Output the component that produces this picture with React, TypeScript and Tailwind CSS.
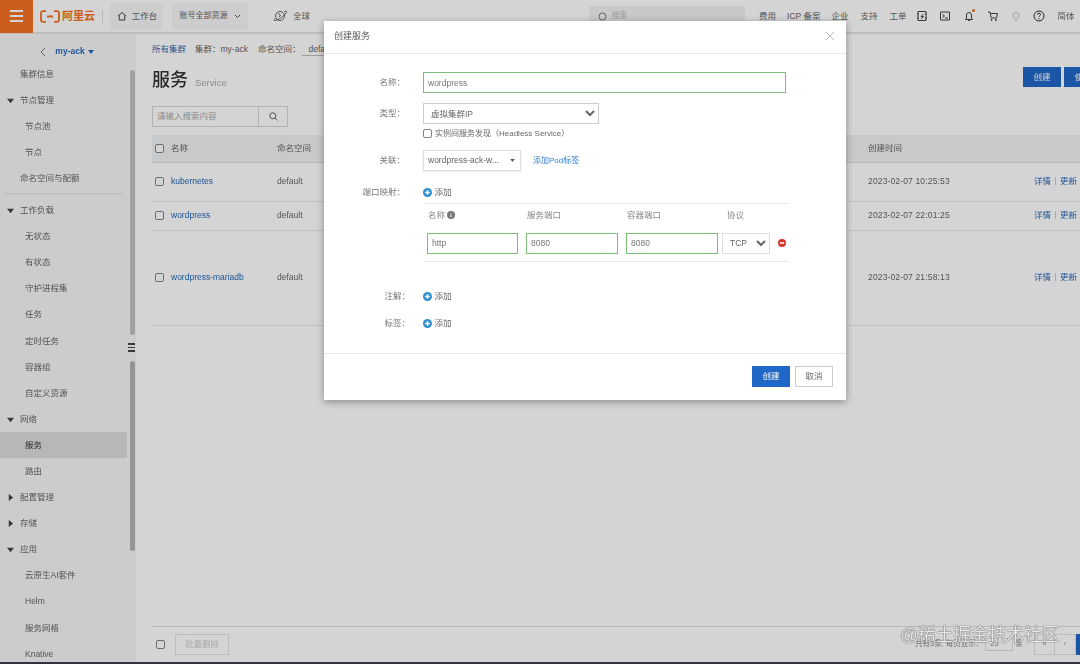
import { FC, ReactNode } from "react";

const FONT = "font-['Liberation_Sans','Noto_Sans_CJK_SC',sans-serif]";

type NavItem = { label: string; level: 0 | 1 | 2; arrow?: "down" | "right"; active?: boolean };

const navItems: NavItem[] = [
  { label: "节点管理", level: 0, arrow: "down" },
  { label: "节点池", level: 2 },
  { label: "节点", level: 2 },
  { label: "命名空间与配额", level: 1 },
  { label: "工作负载", level: 0, arrow: "down" },
  { label: "无状态", level: 2 },
  { label: "有状态", level: 2 },
  { label: "守护进程集", level: 2 },
  { label: "任务", level: 2 },
  { label: "定时任务", level: 2 },
  { label: "容器组", level: 2 },
  { label: "自定义资源", level: 2 },
  { label: "网络", level: 0, arrow: "down" },
  { label: "服务", level: 2, active: true },
  { label: "路由", level: 2 },
  { label: "配置管理", level: 0, arrow: "right" },
  { label: "存储", level: 0, arrow: "right" },
  { label: "应用", level: 0, arrow: "down" },
  { label: "云原生AI套件", level: 2 },
  { label: "Helm", level: 2 },
  { label: "服务网格", level: 2 },
  { label: "Knative", level: 2 },
];

const rows = [
  { name: "kubernetes", h: "h-[39px]", time: "2023-02-07 10:25:53" },
  { name: "wordpress", h: "h-[29px]", time: "2023-02-07 22:01:25" },
  { name: "wordpress-mariadb", h: "h-[95px]", time: "2023-02-07 21:58:13" },
];

const Check: FC = () => (
  <span className="w-[9px] h-[9px] block shrink-0 border border-[#80858a] rounded-[2px] bg-white" />
);

const Caret: FC<{ dir: "down" | "right" }> = ({ dir }) => (
  <svg width="7" height="7" viewBox="0 0 8 8" className="shrink-0">
    {dir === "down" ? <path d="M0 2h8L4 7z" fill="#444" /> : <path d="M2 0v8l5-4z" fill="#444" />}
  </svg>
);

const PlusIcon: FC = () => (
  <svg width="9" height="9" viewBox="0 0 10 10" className="shrink-0">
    <circle cx="5" cy="5" r="5" fill="#2f8fd0" />
    <path d="M5 2.400v5.200M2.400 5h5.200" stroke="#fff" strokeWidth="1.700" />
  </svg>
);

const AddRow: FC<{ label: string; className: string; labelPad?: string }> = ({ label, className, labelPad = "pr-[18px]" }) => (
  <div className={`flex items-center ${className}`}>
    <span className={`w-[99px] ${labelPad} text-right text-[8.500px] text-[#777] whitespace-nowrap`}>{label}</span>
    <PlusIcon />
    <span className="ml-[2.500px] text-[8.500px] text-[#666]">添加</span>
  </div>
);

const Field: FC<{ label: string; children: ReactNode; className?: string }> = ({ label, children, className = "" }) => (
  <div className={`flex items-center ${className}`}>
    <span className="w-[99px] pr-[18px] text-right text-[8.500px] text-[#777]">{label}</span>
    {children}
  </div>
);

const TopIcon: FC<{ children: ReactNode; className?: string }> = ({ children, className = "" }) => (
  <svg width="12" height="12" viewBox="0 0 12 12" fill="none" stroke="#444" strokeWidth="1" className={className}>
    {children}
  </svg>
);

const TopBar: FC = () => (
  <header className="h-[34px] shrink-0 flex items-center bg-white border-b-[2px] border-[#e4e4e4] text-[8.500px] text-[#666] whitespace-nowrap">
    <div className="w-[33px] h-[33px] shrink-0 bg-[#f57124] flex flex-col justify-center items-center gap-[3.500px]">
      <span className="w-[13px] h-[1.500px] bg-white" />
      <span className="w-[13px] h-[1.500px] bg-white" />
      <span className="w-[13px] h-[1.500px] bg-white" />
    </div>
    <svg width="20" height="13" viewBox="0 0 20 13" className="ml-[7px] shrink-0" fill="none" stroke="#f57124" strokeWidth="1.800">
      <path d="M6 1.200H3.200Q1 1.200 1 3.200v6.600q0 2 2.200 2H6M14 1.200h2.800q2.200 0 2.200 2v6.600q0 2-2.200 2H14M7 6.500h6" />
    </svg>
    <span className="ml-[2px] w-[33px] shrink-0 text-[11px] font-bold text-[#f57124] leading-none">阿里云</span>
    <span className="ml-[7px] w-px h-[13px] shrink-0 bg-[#ddd]" />
    <div className="ml-[7px] w-[53px] h-[27px] shrink-0 flex items-center justify-center gap-[4px] bg-[#f7f7f7]">
      <TopIcon>
        <path d="M2 6l4-3.500L10 6M3.200 5.500V10h5.600V5.500" />
      </TopIcon>
      <span>工作台</span>
    </div>
    <div className="ml-[9px] w-[76px] h-[27px] shrink-0 flex items-center justify-center gap-[6px] bg-[#f7f7f7]">
      <span className="text-[8px]">账号全部资源</span>
      <svg width="7" height="5" viewBox="0 0 7 5" fill="none" stroke="#555">
        <path d="M1 1l2.500 2.500L6 1" />
      </svg>
    </div>
    <svg width="16" height="14" viewBox="0 0 16 14" fill="none" stroke="#555" strokeWidth="0.900" className="ml-[24px] shrink-0">
      <circle cx="8" cy="7" r="4.500" />
      <path d="M3 9.500C1 11.500 2 12 5 11c3-1 8-5 9.500-7.500.7-1.500-.5-1.500-2.500-.8M6 4.500l2.500 1.500L7 8" />
    </svg>
    <span className="ml-[5px] w-[17px] shrink-0">全球</span>
    <div className="ml-[279px] w-[156px] h-[20px] shrink-0 flex items-center pl-[9px] gap-[5px] bg-[#f2f2f2] text-[#bbb]">
      <svg width="9" height="9" viewBox="0 0 9 9" fill="none" stroke="#777">
        <circle cx="4.500" cy="4.500" r="3.500" />
      </svg>
      <span className="text-[7.500px]">搜索</span>
    </div>
    <nav className="ml-[14px] flex items-center">
      <span>费用</span>
      <span className="ml-[11px]">ICP 备案</span>
      <span className="ml-[11px]">企业</span>
      <span className="ml-[12px]">支持</span>
      <span className="ml-[12px]">工单</span>
      <TopIcon className="ml-[10px]">
        <path d="M2 1.500h8v9H2zM1 4h2M9 4h2M1 8h2M9 8h2M7.500 4L5 6.500h2.500L5 9" />
      </TopIcon>
      <TopIcon className="ml-[11px]">
        <path d="M1.500 2h9v8h-9zM3.500 4.500L5.500 6 3.500 7.500M6 8h3" />
      </TopIcon>
      <div className="relative ml-[12px]">
        <TopIcon className="block">
          <path d="M2.500 9.500h7L8.500 8V5a2.500 2.500 0 00-5 0v3zM5 10.500h2" />
        </TopIcon>
        <span className="absolute -top-[1px] right-[0px] w-[3px] h-[3px] rounded-full bg-[#ee6a1f]" />
      </div>
      <TopIcon className="ml-[12px]">
        <path d="M1 2h2l1.200 6h5.300L10.500 3.500H3.500" />
        <circle cx="4.500" cy="10" r=".6" />
        <circle cx="9" cy="10" r=".6" />
      </TopIcon>
      <svg width="12" height="12" viewBox="0 0 12 12" fill="none" stroke="#c4c4c4" className="ml-[11px]">
        <path d="M4.500 8.500C3.500 7.500 3 6.700 3 5.500a3 3 0 016 0c0 1.200-.5 2-1.500 3zM5 10.500h2" />
      </svg>
      <svg width="12" height="12" viewBox="0 0 12 12" fill="none" stroke="#333" className="ml-[11px]">
        <circle cx="6" cy="6" r="5" />
        <path d="M4.500 4.700a1.500 1.500 0 113 0c0 1-1.500 1.200-1.500 2.300M6 8.200v1" />
      </svg>
      <span className="ml-[12px]">简体</span>
    </nav>
  </header>
);

const Sidebar: FC = () => (
  <aside className="w-[136px] shrink-0 flex flex-col overflow-hidden bg-[#f6f6f6] text-[8.500px] text-[#666]">
    <div className="h-[26px] shrink-0 flex items-center justify-center gap-[9px] pr-[2px] pt-[9px]">
      <svg width="6" height="10" viewBox="0 0 6 10" fill="none" stroke="#777">
        <path d="M5 1L1 5l4 4" />
      </svg>
      <span className="font-bold text-[#2767b5]">my-ack</span>
      <span className="-ml-[6px]">
        <svg width="6" height="4" viewBox="0 0 6 4">
          <path d="M0 0h6L3 4z" fill="#2767b5" />
        </svg>
      </span>
    </div>
    <div className="flex flex-1 min-h-0">
      <div className="w-[127px] shrink-0 flex flex-col">
        <div className="h-[27px] shrink-0 flex items-center pl-[20px] pt-[1px]">集群信息</div>
        {navItems.map((item) => (
          <div key={item.label}>
            {item.label === "工作负载" && <div className="mx-[4px] mt-[2px] mb-[3px] h-px bg-[#e2e2e2]" />}
            <div
              className={`h-[26.100px] flex items-center ${item.active ? "bg-[#dcdcdc] text-[#333]" : ""} ${
                item.level === 2 ? "pl-[25px]" : item.level === 1 ? "pl-[20px]" : "pl-[7px]"
              }`}
            >
              {item.arrow && <Caret dir={item.arrow} />}
              <span className={item.arrow ? "ml-[6px]" : ""}>{item.label}</span>
            </div>
          </div>
        ))}
      </div>
      <div className="relative w-[9px] flex flex-col items-center pt-[10px]">
        <span className="w-[5px] h-[265px] ml-[1px] rounded-full bg-[#c2c2c2]" />
        <span className="absolute left-[1px] top-[282px] flex flex-col gap-[2px] py-[1px]">
          <span className="w-[7px] h-[1.500px] bg-[#444]" />
          <span className="w-[7px] h-[1.500px] bg-[#444]" />
          <span className="w-[7px] h-[1.500px] bg-[#444]" />
        </span>
        <span className="w-[5px] h-[190px] mt-[26px] ml-[1px] rounded-full bg-[#b4b4b4]" />
      </div>
    </div>
  </aside>
);

const Content: FC = () => (
  <main className="flex-1 min-w-0 flex flex-col pl-[16px] bg-white text-[8.500px] text-[#666] whitespace-nowrap">
    <div className="h-[30px] shrink-0 flex items-center pt-[1px]">
      <span className="text-[#2767b5]">所有集群</span>
      <span className="ml-[9px]">集群：my-ack</span>
      <span className="ml-[10px]">命名空间：</span>
      <span className="ml-[2px] pl-[6px] w-[50px] border-b border-[#bbb]">default</span>
    </div>
    <div className="h-[29px] shrink-0 flex items-end relative">
      <div className="flex items-center w-full">
        <h1 className="text-[18px] leading-[26px] font-medium text-[#333]">服务</h1>
        <span className="ml-[7px] mt-[6px] text-[9.500px] text-[#aaa]">Service</span>
        <div className="ml-auto flex gap-[3px] -mt-[6px]">
          <button className="w-[38px] h-[20px] bg-[#2068c7] text-white text-[8.500px]">创建</button>
          <button className="w-[38px] h-[20px] bg-[#2068c7] text-white text-[8.500px] -mr-[22px]">使用</button>
        </div>
      </div>
    </div>
    <div className="mt-[13px] h-[21px] shrink-0 flex">
      <div className="w-[107px] border border-[#d8d8d8] flex items-center pl-[4px] text-[#aaa] bg-white">请输入搜索内容</div>
      <div className="w-[30px] -ml-px border border-[#d8d8d8] flex items-center justify-center">
        <svg width="9" height="9" viewBox="0 0 9 9" fill="none" stroke="#666">
          <circle cx="3.800" cy="3.800" r="3" />
          <path d="M6 6l2.500 2.500" />
        </svg>
      </div>
    </div>
    <div className="mt-[8px] w-[1000px] flex flex-col flex-1 min-h-0">
      <div className="h-[28px] shrink-0 flex items-center bg-[#f0f2f4] border-b border-[#dbdee0] pl-[3px]">
        <Check />
        <span className="ml-[7px] w-[106px]">名称</span>
        <span className="w-[591px]">命名空间</span>
        <span>创建时间</span>
      </div>
      {rows.map((r) => (
        <div key={r.name} className={`${r.h} shrink-0 flex items-center border-b border-[#e6e8ea] pl-[3px] pb-[2px]`}>
          <Check />
          <span className="ml-[7px] w-[106px] text-[#2767b5]">{r.name}</span>
          <span className="w-[591px]">default</span>
          <span className="w-[166px] tracking-[0.150px]">{r.time}</span>
          <span className="text-[#2767b5]">详情</span>
          <span className="mx-[4px] w-px h-[8px] bg-[#ccc]" />
          <span className="text-[#2767b5]">更新</span>
        </div>
      ))}
      <div className="flex-1" />
    </div>
    <div className="h-[35px] shrink-0 border-t border-[#e0e0e0] w-[1000px] flex items-center pl-[4px] mb-[3px]">
      <Check />
      <span className="ml-[10px] w-[54px] h-[21px] border border-[#e4e4e4] flex items-center justify-center text-[#ccc]">批量删除</span>
      <span className="ml-[686px] text-[7.500px] text-[#888]">共有3条, 每页显示：</span>
      <span className="ml-[2px] w-[28px] h-[13px] border border-[#ddd] flex items-center pl-[4px] text-[7.500px] text-[#888]">25</span>
      <span className="ml-[2px] text-[7.500px] text-[#888]">条</span>
      <span className="ml-[11px] w-[21px] h-[21px] border border-[#e4e4e4] flex items-center justify-center text-[7px] text-[#888]">«</span>
      <span className="w-[21px] h-[21px] border-y border-r border-[#e4e4e4] flex items-center justify-center text-[7px] text-[#888]">‹</span>
      <span className="w-[21px] h-[21px] bg-[#2068c7]" />
    </div>
  </main>
);

const portInput = "h-[21px] border border-[#7dbb78] pl-[4px] text-[8.500px] text-[#777] outline-none";

const CreateModal: FC = () => (
  <section className="absolute left-[324px] top-[21px] w-[522px] h-[379px] flex flex-col bg-white shadow-[0_2px_8px_rgba(0,0,0,0.35)] text-[8.500px] text-[#666]">
    <header className="h-[33px] shrink-0 flex items-center justify-between pl-[10px] pr-[11px] border-b border-[#e8e8e8]">
      <span className="text-[9px] text-[#555]">创建服务</span>
      <svg width="10" height="10" viewBox="0 0 10 10" stroke="#bdbdbd" className="-mt-[3px]">
        <path d="M1 1l8 8M9 1l-8 8" />
      </svg>
    </header>
    <div className="flex-1 min-h-0 flex flex-col pt-[18px]">
      <Field label="名称：" className="h-[21px]">
        <input readOnly defaultValue="wordpress" className={`w-[363px] ${portInput}`} />
      </Field>
      <Field label="类型：" className="h-[21px] mt-[10px]">
        <select defaultValue="ip" className="w-[176px] h-[21px] border border-[#ccc] pl-[3px] text-[8.500px] text-[#666] bg-white">
          <option value="ip">虚拟集群IP</option>
        </select>
      </Field>
      <div className="flex items-center h-[10px] mt-[4px] pl-[99px]">
        <Check />
        <span className="ml-[3px] mt-[2px] text-[8px] whitespace-nowrap">实例间服务发现（Headless Service）</span>
      </div>
      <Field label="关联：" className="h-[21px] mt-[12px]">
        <div className="w-[98px] h-[21px] border border-[#ddd] flex items-center justify-between pl-[4px] pr-[5px] text-[8.500px] shadow-[0_1px_2px_rgba(0,0,0,0.08)]">
          <span>wordpress-ack-w...</span>
          <svg width="5" height="3" viewBox="0 0 6 4">
            <path d="M0 0h6L3 4z" fill="#555" />
          </svg>
        </div>
        <span className="ml-[12px] text-[8px] text-[#2d7fd3]">添加Pod标签</span>
      </Field>
      <AddRow label="端口映射：" className="h-[10px] mt-[16px]" />
      <div className="ml-[100px] mt-[6px] w-[364px] border-t border-[#e8e8e8]">
        <div className="h-[22px] flex items-center pl-[4px] text-[#888]">
          <span className="w-[99px] flex items-center gap-[2px]">
            名称
            <svg width="8" height="8" viewBox="0 0 8 8">
              <circle cx="4" cy="4" r="4" fill="#777" />
              <path d="M4 1.800v.8M4 3.400v2.800" stroke="#fff" />
            </svg>
          </span>
          <span className="w-[100px]">服务端口</span>
          <span className="w-[100px]">容器端口</span>
          <span>协议</span>
        </div>
        <div className="h-[36px] flex items-center pl-[3px] pb-[1px] border-b border-[#e8e8e8]">
          <input readOnly defaultValue="http" className={`w-[91px] ${portInput}`} />
          <input readOnly defaultValue="8080" className={`ml-[8px] w-[92px] ${portInput}`} />
          <input readOnly defaultValue="8080" className={`ml-[8px] w-[92px] ${portInput}`} />
          <select defaultValue="tcp" className="ml-[4px] w-[48px] h-[21px] border border-[#ddd] pl-[3px] text-[8.500px] text-[#666] bg-white">
            <option value="tcp">TCP</option>
          </select>
          <svg width="8" height="8" viewBox="0 0 8 8" className="ml-[8px]">
            <circle cx="4" cy="4" r="4" fill="#d9342b" />
            <path d="M1.800 4h4.400" stroke="#fff" strokeWidth="1.500" />
          </svg>
        </div>
      </div>
      <AddRow label="注解：" labelPad="pr-[13px]" className="h-[10px] mt-[29px]" />
      <AddRow label="标签：" labelPad="pr-[13px]" className="h-[10px] mt-[17px]" />
    </div>
    <footer className="h-[47px] shrink-0 flex items-center justify-end gap-[5px] pr-[13px] pb-[2px] border-t border-[#e8e8e8]">
      <button className="w-[38px] h-[21px] bg-[#2068c7] text-white text-[8.500px]">创建</button>
      <button className="w-[38px] h-[21px] border border-[#ccc] text-[#666] text-[8.500px]">取消</button>
    </footer>
  </section>
);

export default function App() {
  return (
    <div className={`relative w-[1080px] h-[664px] overflow-hidden bg-white ${FONT}`}>
      <div className="flex flex-col w-full h-full blur-[0.45px]">
        <TopBar />
        <div className="flex flex-1 min-h-0">
          <Sidebar />
          <Content />
        </div>
      </div>
      <div className="absolute inset-0 bg-black/[.17]" />
      <div className="absolute inset-0 blur-[0.35px]">
        <CreateModal />
      </div>
      <span className="absolute left-[900px] top-[624px] text-[17.700px] leading-[22px] text-[#e6e6e6] [text-shadow:0_0_1px_#555,0_0_1px_#555]">
        @稀土掘金技术社区
      </span>
      <div className="absolute bottom-0 inset-x-0 h-[2px] bg-[#2f3540]" />
    </div>
  );
}
